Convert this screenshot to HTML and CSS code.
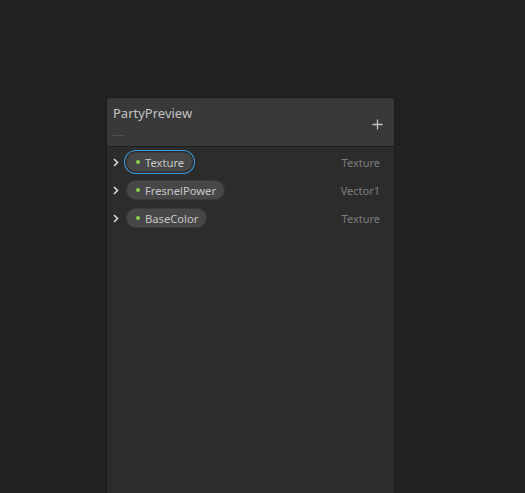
FILE: index.html
```html
<!DOCTYPE html>
<html>
<head>
<meta charset="utf-8">
<link rel="stylesheet" href="styles.css">
</head>
<body>
<div class="panel">
  <div class="header">
    <div class="titles">
      <div class="title">PartyPreview</div>
      <div class="subtitle"></div>
    </div>
    <div class="plus">
      <svg width="11" height="11" viewBox="0 0 11 11"><path d="M5.5 0.5v10M0.5 5.5h10" stroke="#c4c4c4" stroke-width="1.3"/></svg>
    </div>
  </div>
  <div class="rows">
    <div class="row">
      <svg class="chev" width="6" height="9" viewBox="0 0 6 9"><path d="M1 1l3.5 3.5L1 8" fill="none" stroke="#d8d8d8" stroke-width="1.6"/></svg>
      <div class="pill selected"><span class="dot"></span>Texture</div>
      <div class="type">Texture</div>
    </div>
    <div class="row">
      <svg class="chev" width="6" height="9" viewBox="0 0 6 9"><path d="M1 1l3.5 3.5L1 8" fill="none" stroke="#d8d8d8" stroke-width="1.6"/></svg>
      <div class="pill"><span class="dot"></span>FresnelPower</div>
      <div class="type">Vector1</div>
    </div>
    <div class="row">
      <svg class="chev" width="6" height="9" viewBox="0 0 6 9"><path d="M1 1l3.5 3.5L1 8" fill="none" stroke="#d8d8d8" stroke-width="1.6"/></svg>
      <div class="pill"><span class="dot"></span>BaseColor</div>
      <div class="type">Texture</div>
    </div>
  </div>
</div>
</body>
</html>
```
FILE: styles.css
```css
html, body {
  margin: 0;
  padding: 0;
  background: #212121;
  height: 100%;
  overflow: hidden;
}
body {
  font-family: "Noto Sans", "Open Sans", sans-serif;
}
.panel {
  position: relative;
  margin-left: 106px;
  margin-top: 97px;
  width: 289px;
  height: 420px;
  background: #2c2c2c;
  border: 1px solid #1b1b1b;
  border-radius: 4px 4px 0 0;
  box-sizing: border-box;
}
.header {
  display: flex;
  justify-content: space-between;
  background: #393939;
  height: 49px;
  border-bottom: 1px solid #1e1e1e;
  border-radius: 3px 3px 0 0;
  box-sizing: border-box;
  padding: 5px 11px 0 6px;
}
.title {
  color: #c2c2c2;
  font-size: 13px;
  line-height: 20px;
}
.subtitle {
  margin-top: 12px;
  width: 11px;
  height: 1px;
  background: #505050;
}
.plus {
  margin-top: 16px;
  display: flex;
}
.rows {
  display: flex;
  flex-direction: column;
  padding-top: 1px;
}
.row {
  display: flex;
  align-items: center;
  height: 28px;
  padding-left: 6px;
  padding-right: 14px;
}
.chev {
  margin-right: 7px;
  margin-top: 1px;
}
.pill {
  display: flex;
  align-items: center;
  height: 20px;
  box-sizing: border-box;
  padding: 0 8px 0 9px;
  border-radius: 10px;
  background: #474747;
  border: 1px solid #3a3a3a;
  color: #c6c6c6;
  font-size: 11.2px;
}
.pill.selected {
  box-shadow: 0 0 0 1px #2c2c2c, 0 0 0 2px #3b9ee0;
}
.dot {
  width: 4px;
  height: 4px;
  border-radius: 50%;
  background: #8ed04c;
  margin-right: 5px;
}
.type {
  margin-left: auto;
  color: #7e7e7e;
  font-size: 11px;
}
```
